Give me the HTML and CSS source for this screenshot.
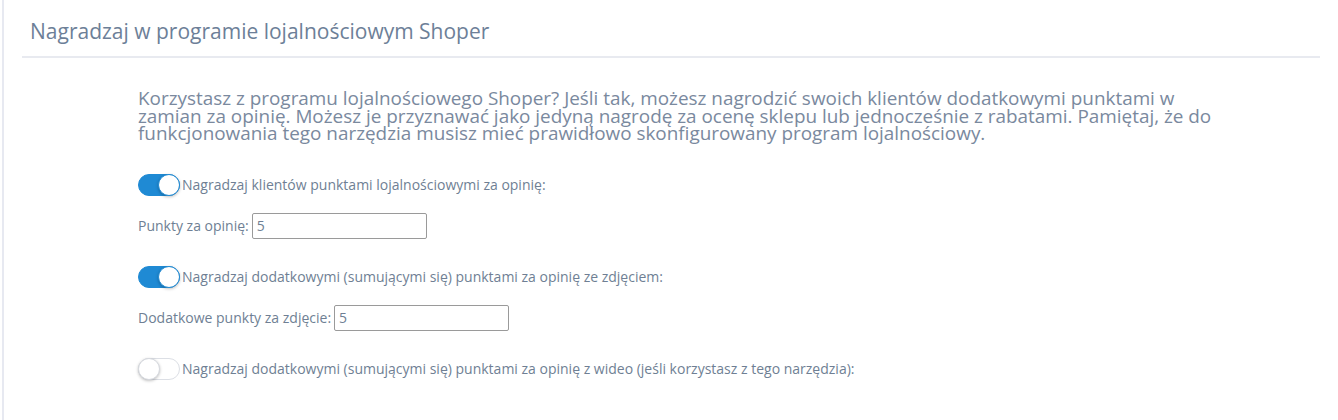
FILE: index.html
```html
<!DOCTYPE html>
<html lang="pl">
<head>
  <meta charset="UTF-8">
  <title>Program lojalnościowy</title>
  <link rel="stylesheet" href="styles.css">
</head>
<body>
  <div class="panel">
    <div class="panel-header">
      <h2>Nagradzaj w programie lojalnościowym Shoper</h2>
    </div>

    <div class="panel-body">
      <p class="intro">Korzystasz z programu lojalnościowego Shoper? Jeśli tak, możesz nagrodzić swoich klientów dodatkowymi punktami w zamian za opinię. Możesz je przyznawać jako jedyną nagrodę za ocenę sklepu lub jednocześnie z rabatami. Pamiętaj, że do funkcjonowania tego narzędzia musisz mieć prawidłowo skonfigurowany program lojalnościowy.</p>

      <!-- punkty za opinię -->
      <label class="switch-row">
        <span class="switch on"><span class="knob"></span></span>
        Nagradzaj klientów punktami lojalnościowymi za opinię:
      </label>
      <div class="field">
        <label for="points">Punkty za opinię:</label>
        <input type="text" id="points" value="5">
      </div>

      <!-- punkty za zdjęcie -->
      <label class="switch-row">
        <span class="switch on"><span class="knob"></span></span>
        Nagradzaj dodatkowymi (sumującymi się) punktami za opinię ze zdjęciem:
      </label>
      <div class="field">
        <label for="photoPoints">Dodatkowe punkty za zdjęcie:</label>
        <input type="text" id="photoPoints" value="5">
      </div>

      <!-- punkty za wideo -->
      <label class="switch-row">
        <span class="switch"><span class="knob"></span></span>
        Nagradzaj dodatkowymi (sumującymi się) punktami za opinię z wideo (jeśli korzystasz z tego narzędzia):
      </label>
    </div>
  </div>
</body>
</html>
```

FILE: styles.css
```css
body {
  margin: 0;
  font-family: "Open Sans", Arial, sans-serif;
  background: #fff;
  color: #6f7f94;
}
.panel {
  margin-left: 2px;
  height: 420px;
  border-left: 2px solid #e7e9f1;
  box-sizing: border-box;
}
.panel-header {
  margin: 0 18px 0 18px;
  padding: 17px 0 11px 8px;
  border-bottom: 2px solid #e8eaf0;
}
.panel-header h2 {
  margin: 0;
  font-size: 21px;
  font-weight: normal;
  line-height: 28px;
  color: #6d7f98;
}
.panel-body {
  padding: 32px 0 0 134px;
}
.intro {
  margin: 0 0 30px;
  width: 1075px;
  font-size: 18.9px;
  line-height: 17.5px;
  color: #7a899e;
}
.switch-row {
  display: flex;
  align-items: center;
  font-size: 14px;
  height: 24px;
}
.switch {
  position: relative;
  width: 42px;
  height: 22px;
  box-sizing: border-box;
  border-radius: 11px;
  border: 1px solid #dcdfe5;
  background: #fff;
  margin-right: 2px;
}
.switch.on {
  background: #1f8ad4;
  border-color: #1f8ad4;
}
.knob {
  position: absolute;
  top: -1px;
  left: -1px;
  width: 22px;
  height: 22px;
  box-sizing: border-box;
  border-radius: 50%;
  background: #fff;
  border: 1px solid #d6d9df;
  box-shadow: 0 1px 3px rgba(0, 0, 0, 0.25);
}
.switch.on .knob {
  left: auto;
  right: -1px;
  border-color: #1f8ad4;
}
.field {
  display: flex;
  align-items: center;
  margin: 16px 0 26px;
  font-size: 14px;
}
.field label {
  margin-right: 3px;
}
.field input {
  width: 175px;
  height: 26px;
  box-sizing: border-box;
  border: 1px solid #9a9a9a;
  border-radius: 2px;
  padding: 0 4px;
  font-family: inherit;
  font-size: 14px;
  color: #6f7f94;
}
```
